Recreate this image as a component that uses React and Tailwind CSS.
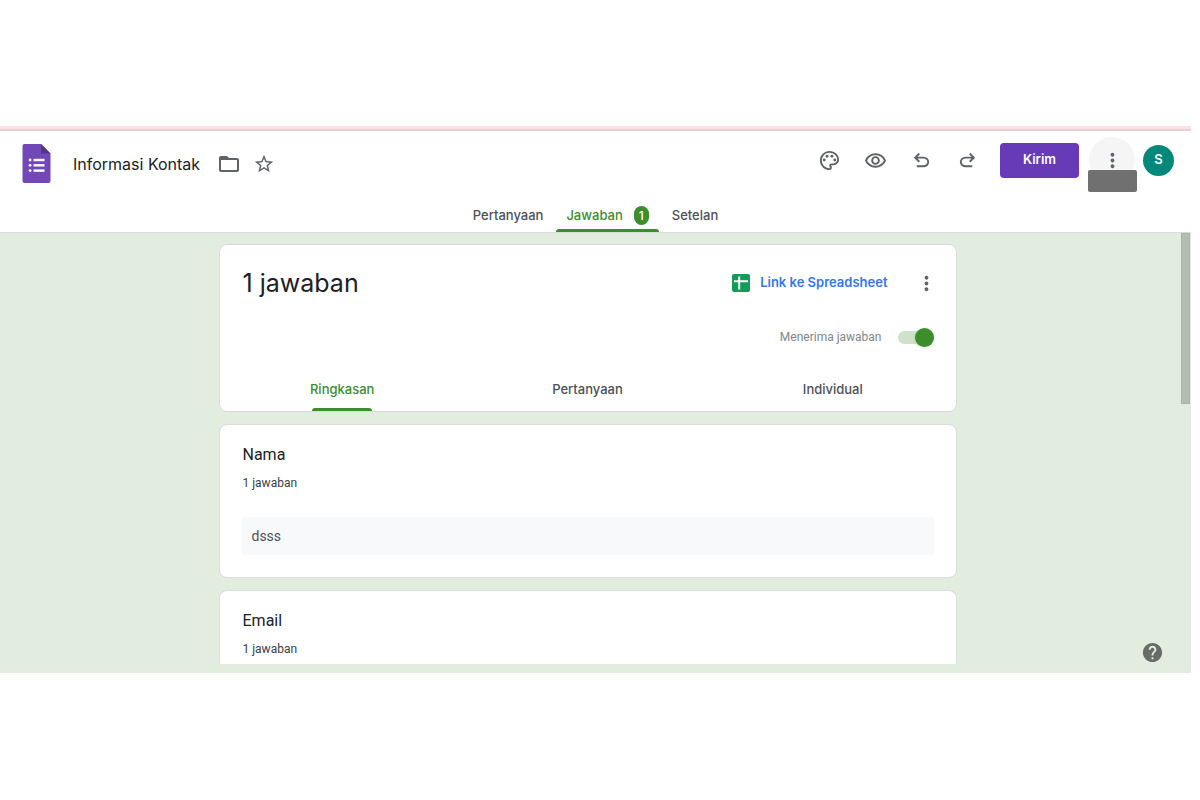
import { useState } from "react";
import {
  MdFolderOpen,
  MdHelp,
  MdMoreVert,
  MdOutlinePalette,
  MdOutlineRemoveRedEye,
  MdStarBorder,
} from "react-icons/md";

const NAV_TABS = [
  { id: "questions", label: "Pertanyaan", pad: "px-[13px]" },
  { id: "responses", label: "Jawaban", pad: "px-[10px]", count: 1 },
  { id: "settings", label: "Setelan", pad: "px-[13px]" },
];

const VIEW_TABS = ["Ringkasan", "Pertanyaan", "Individual"];

function FormsLogo() {
  return (
    <svg viewBox="0 0 28 39" className="w-[29px] h-[39px]" aria-hidden="true">
      <path
        d="M2 0H18.5L28 9.5V37A2 2 0 0 1 26 39H2A2 2 0 0 1 0 37V2A2 2 0 0 1 2 0Z"
        fill="#7248b9"
      />
      <path d="M18.5 0L28 9.5H18.5Z" fill="#54338c" />
      <g fill="#fff">
        <circle cx="7.6" cy="16" r="1.4" />
        <circle cx="7.6" cy="21.3" r="1.4" />
        <circle cx="7.6" cy="26.6" r="1.4" />
        <rect x="11" y="14.8" width="11" height="2.4" />
        <rect x="11" y="20.1" width="11" height="2.4" />
        <rect x="11" y="25.4" width="11" height="2.4" />
      </g>
    </svg>
  );
}

function SheetsIcon() {
  return (
    <svg viewBox="0 0 18 18" className="w-[18px] h-[18px]" aria-hidden="true">
      <rect width="18" height="18" rx="2" fill="#0f9d58" />
      <path d="M2 6.2H16V8.2H8.2V15.5H6.2V8.2H2ZM6.2 2.5H8.2V6.2H6.2Z" fill="#fff" />
    </svg>
  );
}

function UndoIcon() {
  return (
    <svg viewBox="0 -960 960 960" fill="currentColor" className="w-[23px] h-[23px]">
      <path d="M280-200v-80h284q63 0 109.5-40T720-420q0-60-46.5-100T564-560H312l104 104-56 56-200-200 200-200 56 56-104 104h252q97 0 166.5 63T800-420q0 94-69.5 157T564-200H280Z" />
    </svg>
  );
}

function RedoIcon() {
  return (
    <svg viewBox="0 -960 960 960" fill="currentColor" className="w-[23px] h-[23px]">
      <path d="M396-200q-97 0-166.5-63T160-420q0-94 69.5-157T396-640h252L544-744l56-56 200 200-200 200-56-56 104-104H396q-63 0-109.5 40T240-420q0 60 46.5 100T396-280h284v80H396Z" />
    </svg>
  );
}

function IconButton({ label, children }) {
  return (
    <button
      type="button"
      aria-label={label}
      className="w-[46px] h-[46px] rounded-full flex items-center justify-center"
    >
      {children}
    </button>
  );
}

function Header({ tab, setTab }) {
  return (
    <header className="bg-white border-t-2 border-t-[#ebced4] border-b border-b-[#dadce0] text-[#5f6368]">
      <div className="flex items-center justify-between pt-1.5 pr-[17px] pl-[22px]">
        <div className="flex items-center pt-1.5">
          <FormsLogo />
          <div className="flex items-center pt-0.5">
            <h1 className="ml-[22px] text-[16px] leading-6 text-[#202124]">Informasi Kontak</h1>
            <button type="button" aria-label="Folder" className="ml-[17px]">
              <MdFolderOpen className="w-6 h-6" />
            </button>
            <button type="button" aria-label="Star" className="ml-3">
              <MdStarBorder className="w-[22px] h-[22px]" />
            </button>
          </div>
        </div>

        <div className="flex items-center">
          <IconButton label="Theme">
            <MdOutlinePalette className="w-[23px] h-[23px]" />
          </IconButton>
          <IconButton label="Preview">
            <MdOutlineRemoveRedEye className="w-[23px] h-[23px]" />
          </IconButton>
          <IconButton label="Undo">
            <UndoIcon />
          </IconButton>
          <IconButton label="Redo">
            <RedoIcon />
          </IconButton>
          <button
            type="button"
            className="ml-2.5 w-[79px] h-[35px] rounded bg-[#673ab7] text-white text-[13px] font-semibold"
          >
            Kirim
          </button>
          <div className="relative ml-2.5">
            <button
              type="button"
              aria-label="More"
              className="w-[46px] h-[46px] rounded-full bg-[#f5f5f5] flex items-center justify-center"
            >
              <MdMoreVert className="w-[23px] h-[23px]" />
            </button>
            {/* tooltip */}
            <div className="absolute top-[33px] -left-px w-[49px] h-[22px] rounded-xs bg-[#707070]" />
          </div>
          <button
            type="button"
            aria-label="Account"
            className="ml-2 w-[31px] h-[31px] rounded-full bg-[#00897b] text-white text-[13px] font-semibold"
          >
            S
          </button>
        </div>
      </div>

      <nav className="mt-3 flex justify-center">
        {NAV_TABS.map((t) => {
          const active = t.id === tab;
          return (
            <button
              key={t.id}
              type="button"
              onClick={() => setTab(t.id)}
              className={`relative h-[37px] pt-1 flex items-center text-[13px] font-medium ${t.pad} ${
                active ? "text-[#3c8d2b]" : "text-[#4d5156]"
              }`}
            >
              {t.label}
              {t.count && (
                <span className="ml-[11px] w-[15px] h-[19px] rounded-full bg-[#3c8d2b] text-white text-[12px] flex items-center justify-center">
                  {t.count}
                </span>
              )}
              {active && (
                <span className="absolute inset-x-0 bottom-0 h-[3px] rounded-t-sm bg-[#3c8d2b]" />
              )}
            </button>
          );
        })}
      </nav>
    </header>
  );
}

function SummaryCard() {
  const [accepting, setAccepting] = useState(true);
  const [view, setView] = useState("Ringkasan");

  return (
    <section className="bg-white border border-[#dadce0] rounded-lg pt-[18px]">
      <div className="h-10 flex items-center justify-between pl-[23px] pr-[18px]">
        <h2 className="text-[25px] leading-8 text-[#202124]">1 jawaban</h2>
        <div className="flex items-center">
          <button
            type="button"
            className="flex items-center gap-2.5 text-[13px] font-semibold text-[#3578e5]"
          >
            <SheetsIcon />
            Link ke Spreadsheet
          </button>
          <button type="button" aria-label="More" className="ml-[27px] text-[#5f6368]">
            <MdMoreVert className="w-[23px] h-[23px]" />
          </button>
        </div>
      </div>

      <div className="mt-[22px] pr-[22px] flex justify-end">
        <label className="h-6 flex items-center gap-4 cursor-pointer">
          <span className="font-[family-name:Roboto,sans-serif] text-[12px] text-[#80868b]">
            Menerima jawaban
          </span>
          <input
            type="checkbox"
            role="switch"
            className="sr-only"
            checked={accepting}
            onChange={(e) => setAccepting(e.target.checked)}
          />
          <span
            className={`w-9 h-[13px] rounded-full flex items-center ${
              accepting ? "bg-[#cde2c9] justify-end" : "bg-gray-300 justify-start"
            }`}
          >
            <span
              className={`w-[19px] h-[19px] rounded-full shadow ${
                accepting ? "bg-[#3c8d2b]" : "bg-white"
              }`}
            />
          </span>
        </label>
      </div>

      <div className="mt-[18px] grid grid-cols-3">
        {VIEW_TABS.map((v) => (
          <button
            key={v}
            type="button"
            onClick={() => setView(v)}
            className={`h-11 flex justify-center text-[13px] font-medium ${
              v === view ? "text-[#3c8d2b]" : "text-[#4d5156]"
            }`}
          >
            <span className="relative h-full pt-0.5 flex items-center">
              {v}
              {v === view && (
                <span className="absolute inset-x-0.5 bottom-0 h-[3px] rounded-t-sm bg-[#3c8d2b]" />
              )}
            </span>
          </button>
        ))}
      </div>
    </section>
  );
}

function QuestionCard({ title, answers, className }) {
  return (
    <section
      className={`bg-white border border-[#dadce0] px-[22px] pt-[18px] font-[family-name:Roboto,sans-serif] ${className}`}
    >
      <h3 className="pl-px text-[16px] leading-6 text-[#202124]">{title}</h3>
      <p className="pl-px mt-2 text-[12px] leading-4 text-[#3c4043]">1 jawaban</p>
      {answers.map((a) => (
        <div
          key={a}
          className="mt-[26px] h-[38px] px-2.5 flex items-center rounded bg-[#f8f9fa] text-[14px] text-[#4d5156]"
        >
          {a}
        </div>
      ))}
    </section>
  );
}

export default function App() {
  const [tab, setTab] = useState("responses");

  return (
    <div className="min-h-screen bg-white pt-[126px] pr-[9px] font-[Inter,'Liberation_Sans',sans-serif]">
      <div className="h-[3px] bg-[#ffe0e6]" />
      <Header tab={tab} setTab={setTab} />

      <main className="relative flex bg-[#e2ede0]">
        <div className="flex-1 flex justify-center pt-[11px] pb-[9px] pr-1.5">
          <div className="w-full max-w-[738px] flex flex-col gap-3">
            <SummaryCard />
            <QuestionCard title="Nama" answers={["dsss"]} className="rounded-lg pb-[22px]" />
            <QuestionCard title="Email" answers={[]} className="rounded-t-lg border-b-0 pb-[7px]" />
          </div>
        </div>

        {/* scrollbar */}
        <div className="w-2.5">
          <div className="h-[171px] w-[9px] bg-[#b3beb1] border border-[#a9b4a7]" />
        </div>

        <button
          type="button"
          aria-label="Help"
          className="absolute right-[27px] bottom-[9px] text-[#676c66]"
        >
          <MdHelp className="w-[23px] h-[23px]" />
        </button>
      </main>
    </div>
  );
}
